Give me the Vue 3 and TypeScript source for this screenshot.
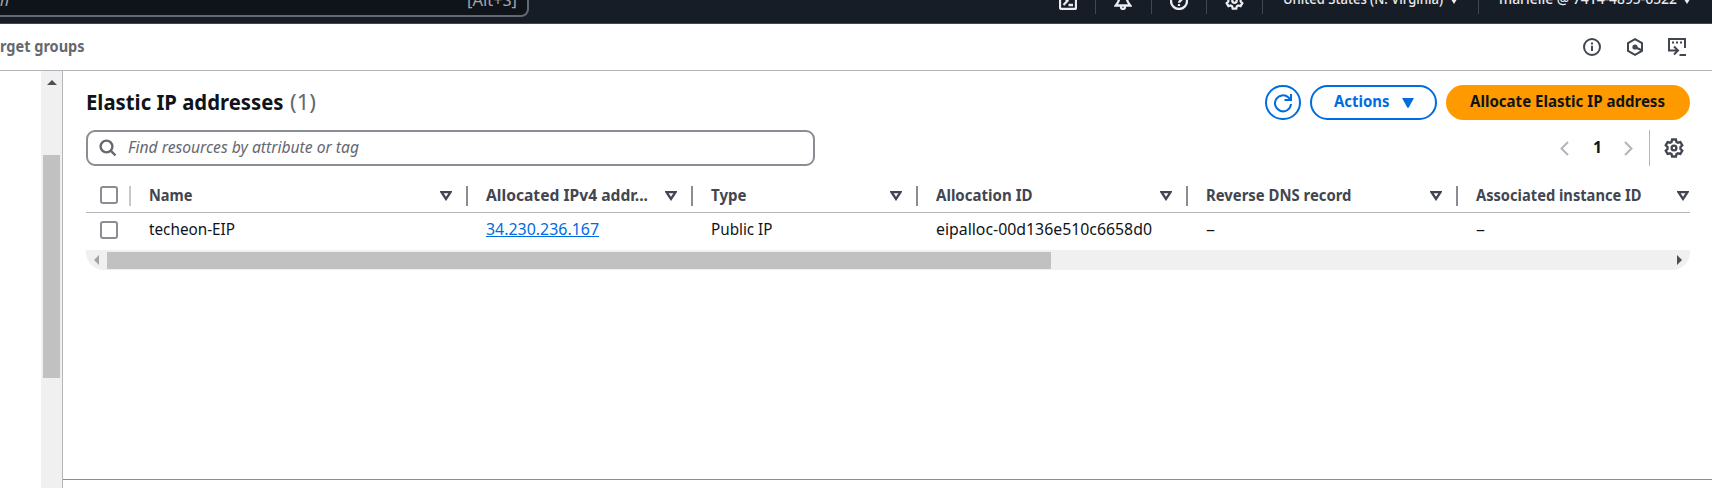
<script setup lang="ts">
import { h, type FunctionalComponent } from 'vue'

interface LabelProps {
  text: string
  w: number
  size?: number
}

// Text line fitted to a fixed advance width; the baseline sits 15px below its top.
const Label: FunctionalComponent<LabelProps> = (props) =>
  h('svg', { width: props.w, height: 20, style: { display: 'block', overflow: 'visible', flex: 'none' } }, [
    h(
      'text',
      {
        x: 0,
        y: 15,
        'font-size': props.size ?? 15.5,
        fill: 'currentColor',
        textLength: props.w,
        lengthAdjust: 'spacingAndGlyphs',
      },
      props.text,
    ),
  ])
Label.props = ['text', 'w', 'size']

interface Column {
  key: string
  title: string
  titleWidth: number
  value: string
  valueWidth: number
  link?: boolean
}

const columns: Column[] = [
  { key: 'name', title: 'Name', titleWidth: 43.5, value: 'techeon-EIP', valueWidth: 86 },
  { key: 'ip', title: 'Allocated IPv4 addr...', titleWidth: 162, value: '34.230.236.167', valueWidth: 113, link: true },
  { key: 'type', title: 'Type', titleWidth: 35.5, value: 'Public IP', valueWidth: 61.5 },
  { key: 'alloc', title: 'Allocation ID', titleWidth: 96.5, value: 'eipalloc-00d136e510c6658d0', valueWidth: 216 },
  { key: 'dns', title: 'Reverse DNS record', titleWidth: 145.5, value: '–', valueWidth: 9 },
  { key: 'instance', title: 'Associated instance ID', titleWidth: 165.5, value: '–', valueWidth: 9 },
]
const gearPath =
  'M6.500 1.200h3l.5 1.900 1.200.7 1.900-.5 1.500 2.500-1.400 1.400v1.600l1.400 1.400-1.500 2.500-1.900-.5-1.200.7-.5 1.900h-3L6 12.900l-1.200-.7-1.900.5-1.500-2.500 1.400-1.400V7.200L1.400 5.800l1.500-2.500 1.900.5L6 3.100z'
</script>

<template>
  <div class="page">
    <header class="topbar">
      <div class="top-search">
        <Label class="typed" text="n" :w="9" />
        <Label text="[Alt+S]" :w="50" />
      </div>
      <div class="top-tools">
        <div class="tool shell">
          <svg width="18" height="18" viewBox="0 0 18 18"><rect x="1" y="1" width="16" height="16" rx="1.500" /><path d="M4.500 5l4 3.800-4 4.200M9.500 13h4.500" /></svg>
        </div>
        <div class="tool bell">
          <svg width="18" height="18" viewBox="0 0 18 18"><path d="M9 1.500C6.300 1.500 5.200 3.500 5.200 6c0 3.500-1.700 5-3.400 7.500h14.400C14.500 11 12.800 9.500 12.800 6c0-2.500-1.100-4.500-3.800-4.500zM7 14v1a2 2 0 0 0 4 0v-1" /></svg>
        </div>
        <div class="tool help">
          <svg width="18" height="18" viewBox="0 0 18 18"><circle cx="9" cy="9" r="8" /><path d="M6.300 7c0-3.700 5.600-3.500 5.600-.3 0 2-2.900 2-2.900 4.100M9 12v2" /></svg>
        </div>
        <div class="tool cog">
          <svg width="19" height="19" viewBox="0 0 16 16"><path :d="gearPath" /><circle cx="8" cy="8" r="1.900" /></svg>
        </div>
        <div class="region">
          <Label text="United States (N. Virginia)" :w="160" :size="14" />
          <svg width="10" height="8" viewBox="0 0 10 8"><path class="solid" d="M0 0h10L5 8z" /></svg>
        </div>
        <div class="account">
          <Label text="marielle @ 7414-4895-6522" :w="178" :size="14" />
          <svg width="10" height="8" viewBox="0 0 10 8"><path class="solid" d="M0 0h10L5 8z" /></svg>
        </div>
      </div>
    </header>

    <nav class="favorites">
      <Label text="rget groups" :w="84.500" />
      <div class="fav-icons">
        <svg width="18" height="18" viewBox="0 0 18 18"><circle cx="9" cy="9" r="8" /><path d="M9 7.700V13M9 4.500v2" /></svg>
        <svg width="18" height="18" viewBox="0 0 18 18"><path d="M9 1.200l7 4v7.600l-7 4-7-4V5.200z" /><circle class="dot" cx="9" cy="9" r="2.600" /><path d="M9 9l7 3.500" /></svg>
        <svg width="18" height="18" viewBox="0 0 18 18"><path d="M17 10V1H1v11.500h8M6 8.500l4 4-4 4M11.500 17H18" /><path class="dots" d="M4 4.500h2M8 4.500h2M12 4.500h2" /></svg>
      </div>
    </nav>

    <div class="body">
      <aside class="side">
        <div class="vscroll">
          <svg width="10" height="5" viewBox="0 0 10 5"><path class="solid" d="M0 5L5 0l5 5z" /></svg>
          <div class="vthumb"></div>
        </div>
      </aside>

      <main class="main">
        <section class="panel">
          <div class="heading">
            <h1 class="title">
              <Label text="Elastic IP addresses" :w="197.500" :size="21.500" />
              <Label class="count" text="(1)" :w="26" :size="21.500" />
            </h1>
            <div class="actions">
              <button class="btn refresh">
                <svg width="20" height="20" viewBox="0 0 20 20"><path d="M18 11a8 8 0 1 1-2.500-6.500l2 2M18 1v6h-6.500" /></svg>
              </button>
              <button class="btn menu">
                <Label text="Actions" :w="55.500" />
                <svg width="12" height="10" viewBox="0 0 12 10"><path class="solid" d="M.5 0h11q.5 0 .2.6L6.700 9.500q-.7.8-1.400 0L.3.6Q0 0 .5 0z" /></svg>
              </button>
              <button class="btn primary"><Label text="Allocate Elastic IP address" :w="195" /></button>
            </div>
          </div>

          <div class="filters">
            <div class="search">
              <svg width="18" height="18" viewBox="0 0 18 18"><circle cx="7.500" cy="7.500" r="5.900" /><path d="M11.700 11.700l4.800 4.800" /></svg>
              <Label text="Find resources by attribute or tag" :w="231" />
            </div>
            <div class="pager">
              <svg width="9" height="15" viewBox="0 0 9 15"><path d="M8 1L1.500 7.500 8 14" /></svg>
              <Label text="1" :w="9" />
              <svg width="9" height="15" viewBox="0 0 9 15"><path d="M1 1l6.500 6.500L1 14" /></svg>
              <div class="settings">
                <svg width="20" height="20" viewBox="0 0 16 16"><path :d="gearPath" /><circle cx="8" cy="8" r="1.900" /></svg>
              </div>
            </div>
          </div>

          <div class="table">
            <div class="row head">
              <div class="cell check"><span class="box"></span></div>
              <div v-for="c in columns" :key="c.key" class="cell">
                <Label :text="c.title" :w="c.titleWidth" />
                <svg class="sort" width="12" height="10" viewBox="0 0 12 10"><path d="M1.500 1.200h9L6 8z" /></svg>
              </div>
            </div>
            <div class="row data">
              <div class="cell check"><span class="box"></span></div>
              <div v-for="c in columns" :key="c.key" class="cell">
                <a v-if="c.link" class="link"><Label :text="c.value" :w="c.valueWidth" /></a>
                <Label v-else :text="c.value" :w="c.valueWidth" />
              </div>
            </div>
          </div>
          <div class="hscroll">
            <svg class="left" width="5" height="10" viewBox="0 0 5 10"><path class="solid" d="M5 0v10L0 5z" /></svg>
            <div class="hthumb"></div>
            <svg class="right" width="5" height="10" viewBox="0 0 5 10"><path class="solid" d="M0 0v10l5-5z" /></svg>
          </div>
        </section>
        <div class="split"></div>
      </main>
    </div>
  </div>
</template>

<style>
body { margin: 0; background: #fff; overflow: hidden; }
</style>

<style scoped>
* { box-sizing: border-box; }
.page { width: 1712px; height: 488px; display: flex; flex-direction: column; overflow: hidden; font-family: "Noto Sans", "Open Sans", sans-serif; color: #0f141a; }
svg { display: block; flex: none; fill: none; stroke: currentColor; stroke-width: 2; }
:deep(text) { stroke: none; }
.solid { fill: currentColor; stroke: none; }

.topbar { height: 24px; flex: none; display: flex; justify-content: space-between; background: #161d26; border-bottom: 1px solid #424650; overflow: hidden; }
.top-search { width: 529px; height: 37px; margin-top: -20px; display: flex; justify-content: space-between; align-items: flex-start; padding: 11px 10px 0 0; background: #0f141a; border: 2px solid #656871; border-left: 0; border-radius: 0 8px 8px 0; color: #a4a4ad; }
.top-search > * { margin-top: -2px; }
.typed { font-style: italic; }
.top-tools { display: flex; height: 14px; color: #ebebf0; }
.tool { height: 14px; border-right: 1px solid #424650; }
.tool svg { margin-top: -8px; stroke-width: 2.3; }
.shell { width: 37px; }
.bell, .help, .cog { padding-left: 18px; }
.bell, .cog { width: 56px; }
.help { width: 55px; }
.tool.cog svg { stroke-width: 1.900; margin-top: -9px; }
.region, .account { display: flex; font-weight: 500; }
.region { width: 216px; padding-left: 20px; border-right: 1px solid #424650; gap: 6px; }
.account { width: 233px; padding-left: 20px; gap: 5px; }
.region > :first-child, .account > :first-child { margin-top: -11px; }
.region > :last-child, .account > :last-child { margin-top: -4px; }

.favorites { height: 47px; flex: none; display: flex; align-items: center; justify-content: space-between; border-bottom: 1px solid #b4b4bb; padding-right: 26px; color: #656871; font-weight: 700; }
.fav-icons { display: flex; gap: 25px; color: #424650; }
.fav-icons > :last-child { margin-left: -1px; }
.dot { fill: currentColor; stroke: none; }
.dots { stroke-width: 2; }

.body { flex: 1; min-height: 0; display: flex; }
.side { width: 63px; flex: none; display: flex; justify-content: flex-end; border-right: 1px solid #b4b4bb; }
.vscroll { width: 21px; background: #f0f0f0; padding: 9px 2px 0; color: #505050; display: flex; flex-direction: column; }
.vscroll svg { margin-left: 4px; }
.vthumb { width: 17px; height: 223px; margin-top: 70px; background: #c1c1c1; }

.main { flex: 1; display: flex; flex-direction: column; justify-content: space-between; }
.panel { padding: 14px 22px 0 23px; }
.split { height: 9px; border-top: 1px solid #8c8c94; }
.heading { height: 35px; display: flex; justify-content: space-between; }
.title { margin: 0; padding-top: 9.5px; display: flex; gap: 6px; }
.count { font-weight: 400; color: #656871; }
.actions { display: flex; gap: 9px; }
.btn { height: 35px; display: flex; align-items: center; justify-content: center; margin: 0; padding: 0; font-family: inherit; font-weight: 700; border: 2px solid #006ce0; border-radius: 18px; background: #fff; color: #006ce0; }
.btn > :first-child { margin-top: -1px; }
.refresh { width: 36px; }
.btn.refresh > :first-child { margin-top: 0; }
.menu { width: 127px; gap: 12.5px; padding-left: 1px; }
.primary { width: 244px; border: 0; padding-right: 2px; background: #ff9900; color: #0f141a; }

.filters { margin-top: 10px; height: 36px; display: flex; justify-content: space-between; }
.search { width: 729px; display: flex; align-items: center; gap: 11px; padding-left: 11px; border: 2px solid #8c8c94; border-radius: 9px; color: #656871; font-style: italic; }
.search > :last-child { margin-top: -1px; }
.search > :first-child { stroke-width: 2.4; }
.pager { display: flex; align-items: center; color: #b4b4bb; }
.pager > :nth-child(2) { margin: 0 22.5px 0 23.5px; color: #0f141a; font-weight: 700; }
.settings { height: 36px; margin-left: 16px; padding-left: 14px; padding-right: 6px; border-left: 1px solid #b4b4bb; display: flex; align-items: center; color: #424650; }
.settings svg { stroke-width: 1.900; }

.table { margin-top: 14px; }
.row { display: grid; grid-template-columns: 45px 337px 225px 225px 270px 270px 232px; }
.head { height: 33px; border-bottom: 1px solid #b4b4bb; color: #424650; font-weight: 700; }
.data { height: 37px; }
.cell { display: flex; justify-content: space-between; padding: 0 14px 0 18px; }
.head .cell { height: 20px; margin-top: 6px; border-right: 2px solid #8c8c94; }
.head .check { border-right-color: #c6c6cd; }
.head .cell:last-child { border-right: 0; padding-right: 1px; }
.data .cell { padding-top: 7px; }
.check.cell { padding-left: 14px; }
.sort { margin-top: 5px; stroke-width: 2.300; }
.box { width: 18px; height: 18px; flex: none; border: 2px solid #8c8c94; border-radius: 3px; background: #fff; }
.data .box { margin-top: 1px; }
.link { height: 17px; border-bottom: 1px solid #006ce0; color: #006ce0; }

.hscroll { height: 20px; display: flex; align-items: center; background: #f0f0f0; border-radius: 0 0 18px 18px; }
.left { margin-left: 8px; color: #a3a3a3; }
.hthumb { width: 944px; height: 17px; margin-left: 8px; background: #c1c1c1; }
.right { margin-left: auto; margin-right: 8px; color: #505050; }
</style>
